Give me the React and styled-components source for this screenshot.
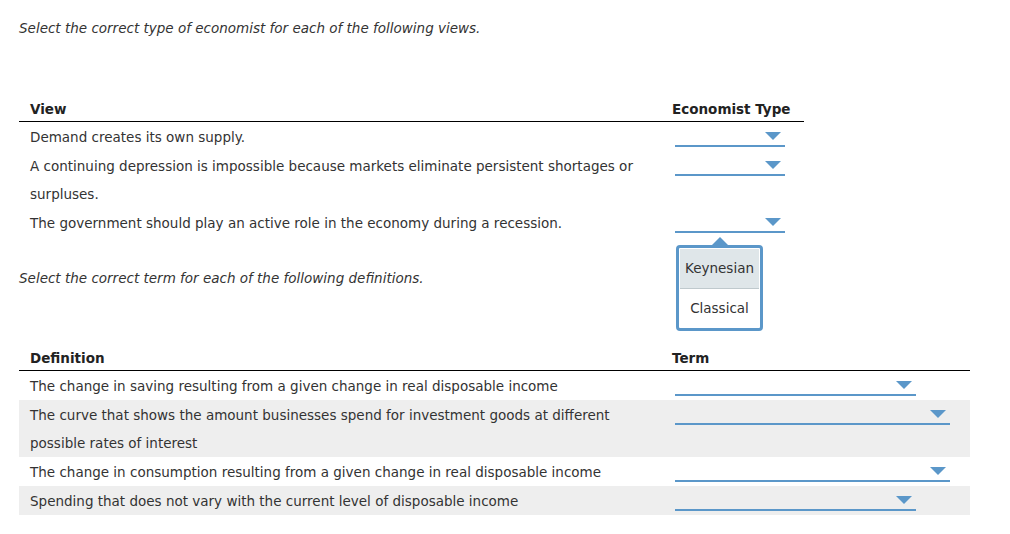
import React from "react";
import styled, { createGlobalStyle } from "styled-components";

const GlobalStyle = createGlobalStyle`
  body {
    margin: 0;
    background: #fff;
    font-family: "DejaVu Sans", Verdana, sans-serif;
    font-size: 13.5px;
    color: #333;
  }
`;

const Page = styled.div`
  padding: 18px 0 0 19px;
`;

const Prompt = styled.p`
  margin: ${(p) => p.$top || 0}px 0 0;
  font-style: italic;
  line-height: 20px;
  color: #333;
`;

const Table = styled.table`
  width: ${(p) => p.$width}px;
  border-collapse: collapse;
  margin-top: ${(p) => p.$top}px;
`;

const HeadCell = styled.th`
  text-align: left;
  font-weight: bold;
  color: #222;
  padding: 0 0 2px ${(p) => (p.$first ? 11 : 12)}px;
  line-height: 20px;
  border-bottom: 1px solid #000;
  width: ${(p) => (p.$first ? "630px" : "auto")};
`;

const Row = styled.tr`
  background: ${(p) => (p.$shaded ? "#eee" : "transparent")};
`;

const TextCell = styled.td`
  padding: 1px 0 0 11px;
  line-height: 28px;
  vertical-align: top;
`;

const SelectCell = styled.td`
  padding: 3px 0 0 15px;
  vertical-align: top;
`;

const Select = styled.div`
  position: relative;
  width: ${(p) => p.$width}px;
  height: 20px;
  border-bottom: 2px solid #5b97c9;
`;

const Caret = styled.span`
  position: absolute;
  right: 4px;
  top: 7px;
  width: 0;
  height: 0;
  border-left: 8px solid transparent;
  border-right: 8px solid transparent;
  border-top: 8px solid #5b97c9;
`;

const Popup = styled.div`
  position: absolute;
  left: 1px;
  top: 34px;
  width: 81px;
  border: 3px solid #5b97c9;
  border-radius: 4px;
  background: #fff;
  z-index: 2;

  &::before {
    content: "";
    position: absolute;
    left: 33px;
    top: -11px;
    border-left: 8px solid transparent;
    border-right: 8px solid transparent;
    border-bottom: 8px solid #5b97c9;
  }
`;

const Option = styled.div`
  height: ${(p) => (p.$active ? 39 : 38)}px;
  line-height: ${(p) => (p.$active ? 39 : 38)}px;
  text-align: center;
  color: #333;
  background: ${(p) => (p.$active ? "#dfe6e9" : "#fff")};
  border-bottom: ${(p) => (p.$active ? "1px solid #bfc9cd" : "none")};
  margin: ${(p) => (p.$active ? "1px 1px 0" : "0 1px 1px")};
`;

const Dropdown = ({ width, open }) => (
  <Select $width={width}>
    <Caret />
    {open && (
      <Popup>
        <Option $active>Keynesian</Option>
        <Option>Classical</Option>
      </Popup>
    )}
  </Select>
);

const views = [
  "Demand creates its own supply.",
  "A continuing depression is impossible because markets eliminate persistent shortages or surpluses.",
  "The government should play an active role in the economy during a recession.",
];

const definitions = [
  ["The change in saving resulting from a given change in real disposable income", 241],
  ["The curve that shows the amount businesses spend for investment goods at different possible rates of interest", 275],
  ["The change in consumption resulting from a given change in real disposable income", 275],
  ["Spending that does not vary with the current level of disposable income", 241],
];

export default function App() {
  return (
    <Page>
      <GlobalStyle />
      <Prompt>Select the correct type of economist for each of the following views.</Prompt>
      <Table $width={785} $top={61}>
        <thead>
          <tr>
            <HeadCell $first>View</HeadCell>
            <HeadCell>Economist Type</HeadCell>
          </tr>
        </thead>
        <tbody>
          {views.map((v, i) => (
            <Row key={v}>
              <TextCell>{v}</TextCell>
              <SelectCell>
                <Dropdown width={110} open={i === 2} />
              </SelectCell>
            </Row>
          ))}
        </tbody>
      </Table>

      <Prompt $top={31}>Select the correct term for each of the following definitions.</Prompt>
      <Table $width={951} $top={60}>
        <thead>
          <tr>
            <HeadCell $first>Definition</HeadCell>
            <HeadCell>Term</HeadCell>
          </tr>
        </thead>
        <tbody>
          {definitions.map(([d, w], i) => (
            <Row key={d} $shaded={i % 2 === 1}>
              <TextCell>{d}</TextCell>
              <SelectCell>
                <Dropdown width={w} />
              </SelectCell>
            </Row>
          ))}
        </tbody>
      </Table>
    </Page>
  );
}
